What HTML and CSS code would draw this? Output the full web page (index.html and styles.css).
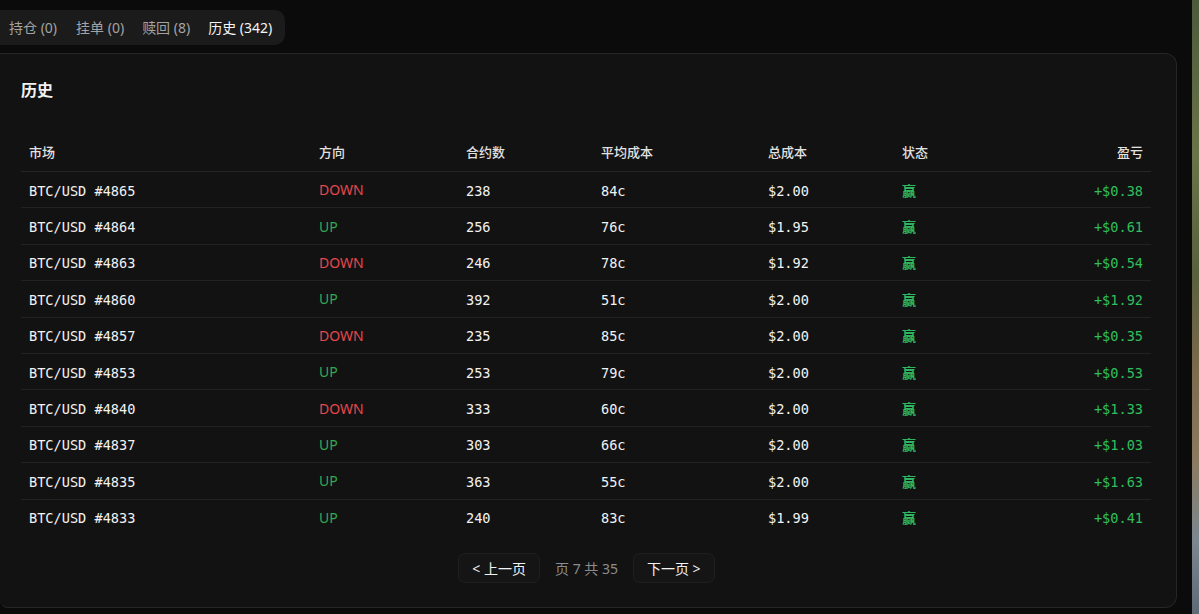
FILE: index.html
```html
<!DOCTYPE html>
<html lang="zh">
<head>
<meta charset="utf-8">
<link rel="stylesheet" href="styles.css">
</head>
<body>
<div class="layout">
  <main class="main">
    <nav class="tabs">
      <span class="tab">持仓 (0)</span>
      <span class="tab">挂单 (0)</span>
      <span class="tab">赎回 (8)</span>
      <span class="tab active">历史 (342)</span>
    </nav>
    <section class="card">
      <h2 class="title">历史</h2>
      <table class="tbl">
        <thead>
          <tr>
            <th class="c-market">市场</th>
            <th class="c-dir">方向</th>
            <th class="c-qty">合约数</th>
            <th class="c-avg">平均成本</th>
            <th class="c-total">总成本</th>
            <th class="c-status">状态</th>
            <th class="c-pnl">盈亏</th>
          </tr>
        </thead>
        <tbody>
          <tr><td class="mono">BTC/USD #4865</td><td class="down">DOWN</td><td class="mono">238</td><td class="mono">84c</td><td class="mono">$2.00</td><td class="win">赢</td><td class="mono pnl">+$0.38</td></tr>
          <tr><td class="mono">BTC/USD #4864</td><td class="up">UP</td><td class="mono">256</td><td class="mono">76c</td><td class="mono">$1.95</td><td class="win">赢</td><td class="mono pnl">+$0.61</td></tr>
          <tr><td class="mono">BTC/USD #4863</td><td class="down">DOWN</td><td class="mono">246</td><td class="mono">78c</td><td class="mono">$1.92</td><td class="win">赢</td><td class="mono pnl">+$0.54</td></tr>
          <tr><td class="mono">BTC/USD #4860</td><td class="up">UP</td><td class="mono">392</td><td class="mono">51c</td><td class="mono">$2.00</td><td class="win">赢</td><td class="mono pnl">+$1.92</td></tr>
          <tr><td class="mono">BTC/USD #4857</td><td class="down">DOWN</td><td class="mono">235</td><td class="mono">85c</td><td class="mono">$2.00</td><td class="win">赢</td><td class="mono pnl">+$0.35</td></tr>
          <tr><td class="mono">BTC/USD #4853</td><td class="up">UP</td><td class="mono">253</td><td class="mono">79c</td><td class="mono">$2.00</td><td class="win">赢</td><td class="mono pnl">+$0.53</td></tr>
          <tr><td class="mono">BTC/USD #4840</td><td class="down">DOWN</td><td class="mono">333</td><td class="mono">60c</td><td class="mono">$2.00</td><td class="win">赢</td><td class="mono pnl">+$1.33</td></tr>
          <tr><td class="mono">BTC/USD #4837</td><td class="up">UP</td><td class="mono">303</td><td class="mono">66c</td><td class="mono">$2.00</td><td class="win">赢</td><td class="mono pnl">+$1.03</td></tr>
          <tr><td class="mono">BTC/USD #4835</td><td class="up">UP</td><td class="mono">363</td><td class="mono">55c</td><td class="mono">$2.00</td><td class="win">赢</td><td class="mono pnl">+$1.63</td></tr>
          <tr><td class="mono">BTC/USD #4833</td><td class="up">UP</td><td class="mono">240</td><td class="mono">83c</td><td class="mono">$1.99</td><td class="win">赢</td><td class="mono pnl">+$0.41</td></tr>
        </tbody>
      </table>
      <div class="pager">
        <button class="pbtn">&lt; 上一页</button>
        <span class="pinfo">页 7 共 35</span>
        <button class="pbtn">下一页 &gt;</button>
      </div>
    </section>
  </main>
  <aside class="scenery"></aside>
</div>
</body>
</html>
```
FILE: styles.css
```css
html, body {
  margin: 0;
  padding: 0;
  height: 100%;
  background: #0b0b0b;
  font-family: "Noto Sans", "Noto Sans CJK SC", sans-serif;
  color: #e8e8e8;
  overflow: hidden;
}

.layout {
  display: flex;
  height: 614px;
}

.main {
  width: 1192px;
  flex: none;
  background: #0b0b0b;
  display: flex;
  flex-direction: column;
  align-items: flex-start;
  padding-top: 10px;
  box-sizing: border-box;
}

.scenery {
  flex: 1;
  background: linear-gradient(180deg, #4c5a3c 0%, #6a7448 25%, #59603e 45%, #7b6a4c 60%, #8b7a60 75%, #7c8790 88%, #5e6a74 100%);
}

.tabs {
  display: flex;
  gap: 2px;
  height: 35px;
  align-items: center;
  padding: 0 5px 0 1px;
  background: #1b1b1c;
  border-radius: 0 10px 10px 0;
  box-sizing: border-box;
}

.tab {
  font-size: 14px;
  color: #a3a3a3;
  padding: 0 8px;
  line-height: 20px;
}

.tab:first-child {
  margin-right: 1px;
}

.tab.active {
  color: #f5f5f5;
}

.card {
  margin-top: 8px;
  width: 1177px;
  height: 555px;
  box-sizing: border-box;
  background: #121212;
  border: 1px solid #262626;
  border-radius: 0 12px 12px 8px;
  border-left: none;
  padding: 24px 24px 0 21px;
}

.title {
  margin: 0;
  font-size: 16px;
  font-weight: 700;
  line-height: 24px;
  color: #f2f2f2;
}

.tbl {
  margin-top: 30px;
  width: 1130px;
  border-collapse: collapse;
  table-layout: fixed;
}

.tbl th {
  font-size: 13px;
  font-weight: 500;
  color: #e2e2e2;
  text-align: left;
  height: 39px;
  padding: 0 8px;
  border-bottom: 1px solid #262626;
}

.tbl td {
  height: 35.4px;
  padding: 0 8px;
  font-size: 14px;
  border-bottom: 1px solid #222;
}

.tbl tbody tr:last-child td {
  border-bottom: none;
}

.c-market { width: 274px; }
.c-dir { width: 131px; }
.c-qty { width: 119px; }
.c-avg { width: 151px; }
.c-total { width: 118px; }
.c-status { width: 104px; }
.tbl th.c-pnl { text-align: right; }

.mono {
  font-family: "DejaVu Sans Mono", "Liberation Mono", monospace;
  color: #f2f2f2;
}

.tbl td.mono {
  font-size: 13.6px;
  padding-top: 2px;
  height: 33.4px;
}

.down { color: #e5484d; }
.up { color: #34a853; }
.win { color: #2fb55d; font-size: 13px; font-weight: 700; }

.tbl td.pnl {
  text-align: right;
  color: #2fbf5c;
}

.pager {
  margin-top: 18px;
  display: flex;
  justify-content: center;
  align-items: center;
  gap: 15px;
}

.pbtn {
  font-family: "Noto Sans", "Noto Sans CJK SC", sans-serif;
  font-size: 14px;
  color: #f2f2f2;
  background: #151515;
  border: 1px solid #1f1f1f;
  border-radius: 7px;
  height: 30px;
  padding: 0 13px;
}

.pinfo {
  font-size: 14px;
  color: #8c8c8c;
}
```
